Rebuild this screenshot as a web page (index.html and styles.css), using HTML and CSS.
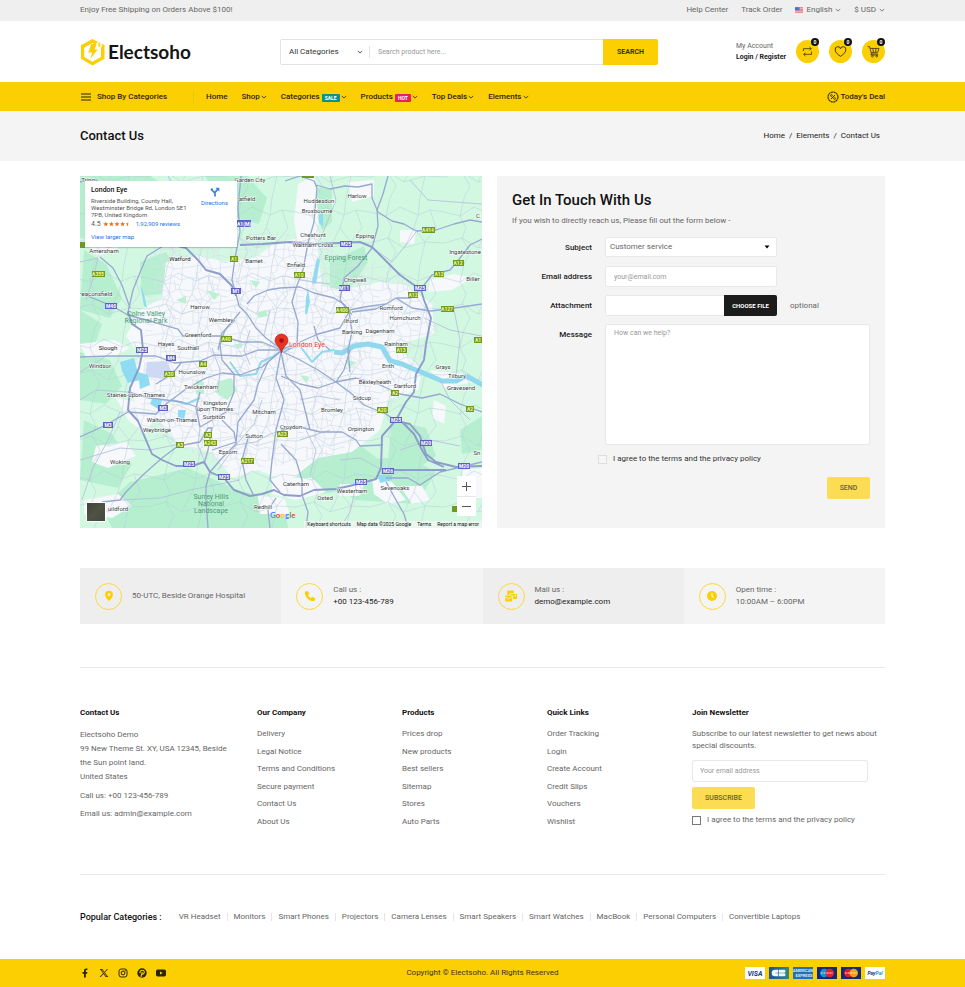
FILE: index.html
```html
<!DOCTYPE html>
<html lang="en">
<head>
<meta charset="utf-8">
<meta name="viewport" content="width=device-width, initial-scale=1">
<title>Contact Us - Electsoho</title>
<link rel="stylesheet" href="styles.css">
</head>
<body>
<svg class="defs" width="0" height="0" aria-hidden="true">
  <symbol id="chev" viewBox="0 0 8 8"><path d="M1 2.500 4 5.500 7 2.500" fill="none" stroke="currentColor" stroke-width="1.1"/></symbol>
</svg>

<div class="topbar">
  <div class="wrap topbar-row">
    <span>Enjoy Free Shipping on Orders Above $100!</span>
    <div class="toplinks">
      <a href="#">Help Center</a>
      <a href="#">Track Order</a>
      <button type="button" class="lang">
        <svg class="flag" viewBox="0 0 16 11" aria-hidden="true"><rect width="16" height="11" fill="#f3dede"/><path d="M0 1h16M0 4h16M0 7h16M0 10h16" stroke="#e0525c" stroke-width="1.5"/><rect width="9" height="6" fill="#4a74c9"/></svg>
        English <svg class="chev"><use href="#chev"/></svg>
      </button>
      <button type="button" class="currency">$ USD <svg class="chev"><use href="#chev"/></svg></button>
    </div>
  </div>
</div>

<header class="header">
  <div class="wrap header-row">
    <a class="logo" href="#">
      <svg viewBox="0 0 25 28" aria-hidden="true">
        <path d="M18 4 12.500 1 1 7.300V20.700L12.500 27.400 24.500 20.700V7.300L21.800 5.800V9L21 9.300V19L12.500 23.700 4.200 19V9.500L12.500 5 15 6.300Z" fill="#fccf02"/>
        <path d="M18.500 4.300 20.300 5v4.300l-1.800-1Z" fill="#fccf02"/>
        <path d="M11.200 6h5.600l-2.400 5.400h3.400L10.400 20.800l1.800-6.300H8.300Z" fill="#fccf02"/>
      </svg>
      <span>Electsoho</span>
    </a>
    <form class="search">
      <div class="search-cat">
        <select aria-label="Category"><option>All Categories</option></select>
        <svg class="chev"><use href="#chev"/></svg>
      </div>
      <input type="search" aria-label="Search product" placeholder="Search product here...">
      <button type="button">SEARCH</button>
    </form>
    <div class="account">
      <span>My Account</span>
      <a href="#">Login / Register</a>
    </div>
    <div class="actions">
      <a href="#" aria-label="Compare"><svg viewBox="0 0 16 16"><path d="M3 7.500V4.500h9.500M10.500 2.500l2.200 2-2.200 2M13 8v3.500H3.500M5.500 9.500l-2.200 2 2.200 2" fill="none" stroke="#3a3312"/></svg><b>0</b></a>
      <a href="#" aria-label="Wishlist"><svg viewBox="0 0 16 16"><path d="M8 14C4 11.200 1.500 9 1.500 6A3.300 3.300 0 0 1 8 4.700a3.300 3.300 0 0 1 6.500 1.300C14.500 9 12 11.200 8 14Z" fill="none" stroke="#3a3312" stroke-width="1.200"/></svg><b>0</b></a>
      <a href="#" aria-label="Cart"><svg viewBox="0 0 16 16"><path d="M.8 2h2.400l2.300 9h8M3.900 4.200h10.900l-1.600 4.600-8 .5M5.500 11l-.8 1.300h9M7.300 4.200l.6 4.900M11 4.200l-.3 4.600" fill="none" stroke="#3a3312"/><circle cx="6.700" cy="13.800" r="1.100" fill="none" stroke="#3a3312" stroke-width=".9"/><circle cx="12" cy="13.800" r="1.100" fill="none" stroke="#3a3312" stroke-width=".9"/></svg><b>0</b></a>
    </div>
  </div>
</header>

<nav class="nav">
  <div class="wrap nav-row">
    <button type="button" class="shopby">
      <svg viewBox="0 0 10 8" aria-hidden="true"><path d="M0 1h10M0 4h10M0 7h10" stroke="#2b2508" stroke-width="1.200"/></svg>
      Shop By Categories
    </button>
    <ul>
      <li><a href="#">Home</a></li>
      <li><a href="#">Shop<svg class="chev"><use href="#chev"/></svg></a></li>
      <li><a href="#">Categories<em class="sale">SALE</em><svg class="chev"><use href="#chev"/></svg></a></li>
      <li><a href="#">Products<em class="hot">HOT</em><svg class="chev"><use href="#chev"/></svg></a></li>
      <li><a href="#">Top Deals<svg class="chev"><use href="#chev"/></svg></a></li>
      <li><a href="#">Elements<svg class="chev"><use href="#chev"/></svg></a></li>
    </ul>
    <a class="deal" href="#">
      <svg viewBox="0 0 12 12" aria-hidden="true"><g fill="none" stroke="#2b2508"><circle cx="6" cy="6" r="5" stroke-width="1.100" stroke-dasharray="2.200 .4"/><path d="M4 8l4-4"/><circle cx="4.400" cy="4.500" r=".9" stroke-width=".8"/><circle cx="7.600" cy="7.500" r=".9" stroke-width=".8"/></g></svg>
      Today's Deal
    </a>
  </div>
</nav>

<div class="crumbs">
  <div class="wrap crumbs-row">
    <h1>Contact Us</h1>
    <div class="trail"><a href="#">Home</a><span>/</span><a href="#">Elements</a><span>/</span><span>Contact Us</span></div>
  </div>
</div>

<main class="wrap">
  <section class="contact">
    <div class="map">
      <svg class="map-art" viewBox="80 176 402 352" preserveAspectRatio="xMidYMid slice" role="img" aria-label="Map of London">
        <defs>
          <pattern id="streets" width="38" height="34" patternUnits="userSpaceOnUse">
            <path d="M0 5 9 7 19 3 30 8 38 5M0 19 8 16 17 21 27 17 38 19M0 29 12 27 22 31 38 29M6 0 9 7 8 16 12 27 10 34M19 3 17 21 22 31 20 34M20 0 19 3M10 0 6 0M30 8 27 17 31 24 30 34M30 0 30 8M9 12 18 11 28 13M12 27 17 21M31 24 38 25M22 8 24 18M3 6 3 17" fill="none" stroke="#d9e0ec" stroke-width=".7"/>
          </pattern>
          <pattern id="lanes" width="74" height="66" patternUnits="userSpaceOnUse">
            <path d="M0 14 16 18 30 9 48 17 60 12 74 14M0 45 18 40 34 50 55 44 74 45M20 0 16 18 22 30 18 40 26 54 20 66M48 17 44 30 55 44 50 66M50 0 48 17M34 50 44 30M60 12 66 30 55 44" fill="none" stroke="#b7cbd9" stroke-width=".5"/>
          </pattern>
        </defs>
        <rect x="80" y="176" width="402" height="352" fill="#d2f8e2"/>
        <g fill="#b5efcf">
          <path d="M80 176h70l20 12-18 26-22 4-18 26-32-6ZM84 250l22 14 16 34-12 20-30-8ZM140 262l26-10 10 16-14 26-20 2ZM80 310l22 14-6 18-16 2Z"/>
          <path d="M205 176h42l20 22-8 26-30-8ZM330 262l34-16 4 16-18 26-20 6ZM318 188l14 0 0 34-10 8-6-18Z"/>
          <path d="M80 352l30 8 12 26-16 18-26-4ZM84 420l28 14 20 30-14 24-38-8ZM130 482l58-14 50 22 46 12 4 26h-176l-10-20ZM300 450l56-8 26 20-10 24-50 8-26-20ZM392 420l34 8 10 28-26 18-22-14ZM460 430l22-14v34l-20 4ZM346 462l60-6 30 16-20 32-60-4-26-16ZM218 382l16-4 8 10-10 12-16-6Z"/>
        </g>
        <g fill="#f6f8fb">
          <path d="M166 262l34-6 26 6 28-4 20-14 24-6 20 14 4 34 20 4 38-8 24 2 28 20 2 30-40 12 28 22-4 22-30 10-8 30-28 22-34 6-30 24-30-12-26 8-20-26-32-6-20-24-26-22-6-22 12-22-14-20 14-26 22-12Z"/>
          <path d="M84 240l24-2 10 10-20 8ZM80 344l34-4 16 8-14 8-30 2ZM116 398l22 4 16 16-8 16-18-14ZM96 446l30-4 10 14-28 12-16-6ZM84 500l34-6 14 12-20 12-28-4ZM176 196l20-14 16 8-18 18ZM298 184l16-8 4 36 0 44-18 4-6-40ZM348 182l26-2 0 16-22 6ZM400 230l16 0-2 14-14-2ZM430 280l24-6 18 4-20 12-24 2ZM430 370l32 4 12 8-30 6ZM434 400l12 6-2 18-12-6ZM272 478l40 0 14 14-30 8-24-6ZM258 496l26 2 6 16-30 0ZM372 478l20 4 14 18-18 4-14-10ZM340 484l24 0-4 12-22 0ZM400 486l22 0 8 14-18 4ZM462 470l20-2v30h-16Z"/>
        </g>
        <path d="M150 240 280 232 400 270 440 330 400 400 330 460 230 470 140 430Z" fill="url(#streets)"/>
        <rect x="80" y="176" width="402" height="352" fill="url(#lanes)"/>
        <g fill="#bdf0d3">
          <path d="M217 382l14-4 6 12-10 10-12-8ZM196 380l8 2 0 12-8 0ZM258 312l8-2 2 6-10 2ZM206 290l14 4-6 6ZM176 300l10-4 0 8ZM250 280l10 2-4 6ZM345 360l12 2-8 6ZM300 375l10 2-4 6ZM232 345l10-2 0 5Z"/>
        </g>
        <path d="M147 362l20-1 5 12-7 6-20-2Z" fill="#d0d9f4"/>
        <path d="M120 362l14-4 6 22-12 3-6-12ZM138 372l10 3 2 10-10 4ZM152 399l10 1-2 10-10-6ZM178 410l8 0-2 10-6-2ZM140 284l4 10 3 14-3-2ZM317 258l3 2-4 24-4-1ZM308 288l2 14-3 12-2 0 1-16ZM319 215l4-2 0 14-4-4ZM378 475l14 0 0 5-12 3Z" fill="#8fdcf2"/>
        <path d="M172 400 186 404 200 398M230 362 240 376 256 374 261 362 272 357 284 349 300 346 312 362 322 352 334 350" fill="none" stroke="#8fd9ee" stroke-width="2" stroke-linejoin="round"/>
        <path d="M334 352 342 353 354 346 368 344 382 347 390 361 402 364 416 370 428 375 442 381 456 381 466 376 483 385" fill="none" stroke="#90d8ed" stroke-width="5" stroke-linejoin="round"/>
        <g fill="none" stroke="#b6c3dc" stroke-width=".9" stroke-linejoin="round">
          <path d="M80 262 98 258 92 282 86 300M80 372 100 360 112 352M80 400 96 390 128 392M120 412 108 440 92 470 82 500M180 444 150 450 120 448 80 460M262 400 254 424 236 445 218 470M200 428 198 445 206 465M285 430 270 434 256 442 236 445M300 440 330 430M300 400 318 396 340 400M212 348 220 370 218 392M250 330 244 350 250 365M270 310 264 335M376 250 392 262 410 240 416 232M300 280 330 284M400 450 430 440 460 446M382 470 360 458 340 460M120 500 160 498 190 490 240 480M330 176 336 200 320 240M440 380 450 400 470 420M424 318 450 330 482 336M454 310 460 340 456 376M306 430 316 450 310 476M356 486 350 512 340 528M168 176 180 200 176 226 190 246M410 180 428 200 482 204"/>
        </g>
        <g fill="none" stroke="#98a9d0" stroke-width="1.300" stroke-linejoin="round">
          <path d="M100 257 113 268 122 285 130 308M80 293 95 299 112 306 128 315 150 321 164 325 178 329 183 336 204 336 220 336 242 342 262 342 281 350M163 246 147 256 141 270 133 290 128 312"/>
          <path d="M241 176 238 208 240 232 235 258 232 280 236 294 239 306 247 314 256 328 266 338 281 349M235 320 222 333 218 350M247 304 254 296 268 290 280 288 300 287 314 293 334 298 345 305 352 315"/>
          <path d="M240 312 225 330 220 345 222 360 234 374 234 392 226 412 200 427 196 408 200 392M80 182 96 180 108 190M285 181 300 176 314 181 317 188 314 222 308 243 303 270 296 288 292 302 298 322 297 345 284 352M316 185 330 189 345 186 358 187 372 184 372 198 378 212 392 221 404 224 416 231 436 230 454 224 470 220 482 222"/>
          <path d="M388 176 383 194 377 210 378 226 372 248 358 266 344 278 340 300 349 312 352 332 348 350 350 372M282 349 300 342 318 334 340 328 350 310 364 307 386 304 396 298 410 298 420 290 432 275 450 270 460 258 470 245 482 239M352 312 376 309 386 304M396 298 412 308 430 311 448 309 482 304M314 326 318 340 330 350"/>
          <path d="M80 357 110 356 140 356 156 356 174 363 200 361 214 355 242 356 258 350 281 350M80 437 106 425 128 412 156 414 166 404 186 389 206 378 222 373 240 375 262 367 281 351M128 392 150 398 182 402 200 408M156 384 172 374 182 362"/>
          <path d="M102 502 120 500 126 492 144 474 162 458 178 446 200 442 208 428 212 428 208 450 204 464M212 450 236 442 234 432 222 420M281 351 268 362 258 384 254 400 238 422 236 444 222 458 210 472 206 486 206 500 208 528M248 438 242 460 246 480 254 496M270 528 268 510 276 498M281 352 286 376 300 390 310 430M281 352 276 378 284 400 276 430 272 460 270 480 280 492"/>
          <path d="M281 351 300 360 318 370 336 382 356 378 380 385 400 394 422 398 440 394 460 404 482 412M336 382 352 394 364 405 386 414 396 421M281 376 300 384 318 388 336 382 344 370 350 350M281 430 300 427 320 432 342 432 356 440 360 446 383 445M281 444 296 460 302 480 302 495 308 512 306 528M386 482 396 500 404 514 408 528M482 462 440 472 420 485 408 478 386 478"/>
        </g>
        <g fill="none" stroke="#8c9ccb" stroke-width="1.900" stroke-linejoin="round">
          <path d="M128 312 132 324 141 330 143 350 139 368 130 388 128 410 138 421 146 440 152 454 162 460 176 466 192 466 204 462 210 472 224 478 234 490 250 496 262 494 274 490 284 495 300 496 314 490 336 489 358 484 376 479 381 468 382 436 390 427 396 420 406 402 414 392 416 374 424 360 426 344 431 318 424 300 421 290 400 275 372 247 360 242 340 243 315 244 290 242 262 244 240 245M170 244 186 248 198 260 206 270 220 274 232 286 236 296M396 421 410 424 420 436 426 454 436 462 456 467 482 466M401 421 414 434 422 450 428 460 444 467M382 470 410 470 446 470"/>
        </g>
        <g class="shield-m">
          <g fill="#5f5fc4"><rect x="236" y="220" width="15" height="7"/><rect x="340" y="241" width="12" height="6"/><rect x="231" y="288" width="10" height="6"/><rect x="105" y="303" width="12" height="6"/><rect x="339" y="285" width="11" height="6"/><rect x="414" y="285" width="12" height="6"/><rect x="136" y="347" width="12" height="6"/><rect x="166" y="355" width="10" height="6"/><rect x="158" y="405" width="10" height="6"/><rect x="103" y="422" width="10" height="6"/><rect x="183" y="461" width="12" height="6"/><rect x="218" y="474" width="12" height="6"/><rect x="390" y="417" width="12" height="6"/><rect x="420" y="440" width="12" height="6"/><rect x="458" y="463" width="12" height="6"/><rect x="382" y="468" width="12" height="6"/><rect x="355" y="479" width="12" height="6"/></g>
          <text x="244" y="226">A1(M)</text><text x="346" y="246">M25</text><text x="236" y="293">M1</text><text x="111" y="308">M40</text><text x="344" y="290">M11</text><text x="420" y="290">M25</text><text x="142" y="352">M25</text><text x="171" y="360">M4</text><text x="163" y="410">M3</text><text x="108" y="427">M3</text><text x="189" y="466">M25</text><text x="224" y="479">M25</text><text x="396" y="422">M25</text><text x="426" y="445">M20</text><text x="464" y="468">M20</text><text x="388" y="473">M26</text><text x="361" y="484">M25</text>
        </g>
        <g class="shield-a">
          <g fill="#6f9a1e"><rect x="230" y="256" width="8" height="6"/><rect x="92" y="271" width="13" height="6"/><rect x="80" y="242" width="5" height="6"/><rect x="302" y="172" width="12" height="6"/><rect x="422" y="227" width="13" height="6"/><rect x="453" y="260" width="11" height="6"/><rect x="434" y="271" width="10" height="6"/><rect x="294" y="272" width="11" height="6"/><rect x="408" y="292" width="10" height="6"/><rect x="336" y="307" width="13" height="6"/><rect x="441" y="306" width="13" height="6"/><rect x="221" y="336" width="11" height="6"/><rect x="396" y="347" width="11" height="6"/><rect x="474" y="337" width="8" height="6"/><rect x="164" y="371" width="11" height="6"/><rect x="199" y="361" width="8" height="6"/><rect x="391" y="390" width="8" height="6"/><rect x="377" y="407" width="11" height="6"/><rect x="466" y="406" width="8" height="6"/><rect x="204" y="432" width="8" height="6"/><rect x="204" y="440" width="13" height="6"/><rect x="176" y="442" width="8" height="6"/><rect x="241" y="458" width="13" height="6"/><rect x="277" y="431" width="11" height="6"/><rect x="452" y="506" width="8" height="6"/></g>
          <text x="234" y="261">A1</text><text x="98" y="276">A355</text><text x="428" y="232">A414</text><text x="458" y="265">A12</text><text x="439" y="276">A12</text><text x="299" y="277">A10</text><text x="413" y="297">A12</text><text x="342" y="312">A406</text><text x="447" y="311">A127</text><text x="226" y="341">A40</text><text x="401" y="352">A13</text><text x="478" y="342">A1</text><text x="169" y="376">A30</text><text x="203" y="366">A4</text><text x="395" y="395">A2</text><text x="382" y="412">A20</text><text x="470" y="411">A2</text><text x="208" y="437">A3</text><text x="210" y="445">A243</text><text x="180" y="447">A3</text><text x="247" y="463">A217</text><text x="282" y="436">A23</text>
        </g>
        <g class="towns">
          <text x="88" y="182">Tring</text><text x="250" y="182">Garden City</text><text x="247" y="201">atfield</text><text x="261" y="240">Potters Bar</text><text x="104" y="253">Amersham</text><text class="big" x="180" y="261">Watford</text><text x="254" y="263">Barnet</text><text x="97" y="296">eaconsfield</text><text x="200" y="309">Harrow</text><text x="221" y="322">Wembley</text><text x="198" y="337">Greenford</text><text x="166" y="346">Hayes</text><text x="188" y="350">Southall</text><text class="big" x="108" y="350">Slough</text>
          <text x="319" y="203">Hoddesdon</text><text x="317" y="213">Broxbourne</text><text x="357" y="198">Harlow</text><text x="313" y="237">Cheshunt</text><text x="313" y="247">Waltham Cross</text><text x="365" y="238">Epping</text><text x="296" y="267">Enfield</text><text x="355" y="282">Chigwell</text><text x="465" y="254">Ingatestone</text><text x="473" y="281">Biller</text><text x="391" y="310">Romford</text><text x="405" y="320">Hornchurch</text><text x="351" y="323">Ilford</text><text x="352" y="334">Barking</text><text x="380" y="333">Dagenham</text><text x="396" y="346">Rainham</text><text x="478" y="218">C</text>
          <text x="100" y="368">Windsor</text><text x="192" y="374">Hounslow</text><text x="201" y="389">Twickenham</text><text x="136" y="397">Staines-upon-Thames</text><text x="215" y="405">Kingston</text><text x="215" y="411">upon Thames</text><text x="214" y="419">Surbiton</text><text x="172" y="422">Walton-on-Thames</text><text x="157" y="432">Weybridge</text><text x="264" y="414">Mitcham</text><text x="254" y="438">Sutton</text><text x="228" y="454">Epsom</text><text x="120" y="464">Woking</text><text x="118" y="511">uildford</text><text x="263" y="509">Redhill</text>
          <text x="388" y="368">Erith</text><text x="443" y="369">Grays</text><text x="457" y="378">Tilbury</text><text x="375" y="384">Bexleyheath</text><text x="405" y="388">Dartford</text><text x="461" y="390">Gravesend</text><text x="362" y="400">Sidcup</text><text x="332" y="412">Bromley</text><text x="291" y="429">Croydon</text><text x="361" y="431">Orpington</text><text x="477" y="455">Sn</text><text x="296" y="486">Caterham</text><text x="325" y="500">Oxted</text><text x="352" y="493">Westerham</text><text x="395" y="490">Sevenoaks</text>
        </g>
        <g class="parks">
          <text x="146" y="316">Colne Valley</text><text x="146" y="323">Regional Park</text><text x="346" y="260">Epping Forest</text><text x="211" y="499">Surrey Hills</text><text x="211" y="506">National</text><text x="211" y="513">Landscape</text>
        </g>
        <path d="M281.500 353C280 346 275 345 275 340.500a6.500 6.500 0 0 1 13 0C288 345 283 346 281.500 353Z" fill="#ea3323" stroke="#b31412" stroke-width=".6"/>
        <circle cx="281.500" cy="340.500" r="2.300" fill="#a01212"/>
        <text class="pinlabel" x="289" y="347">London Eye</text>
      </svg>

      <div class="place">
        <div class="place-info">
          <strong>London Eye</strong>
          <p>Riverside Building, County Hall,<br>Westminster Bridge Rd, London SE1<br>7PB, United Kingdom</p>
          <div class="rating">4.5
            <svg viewBox="0 0 45 9" aria-label="4.5 stars"><g fill="#e7711b"><path id="star" d="M4.500.5 5.600 3.300 8.600 3.500 6.300 5.400 7 8.300 4.500 6.700 2 8.300 2.700 5.400.4 3.500 3.400 3.300Z"/><use href="#star" x="9"/><use href="#star" x="18"/><use href="#star" x="27"/><path d="M40.500.5V6.700L38 8.300 38.700 5.400 36.400 3.500 39.400 3.300Z"/></g></svg>
            <a href="#">1,92,909 reviews</a></div>
          <a href="#">View larger map</a>
        </div>
        <a class="directions" href="#">
          <svg viewBox="0 0 12 12" aria-hidden="true"><path d="M6 11.500V7.500L2 3.300M6 8V6.500L9 3.200" fill="none" stroke="#3b7de0" stroke-width="2"/><path d="M6.500 1h4.700v4.700Z" fill="#3b7de0"/><circle cx="2.200" cy="3" r="1.400" fill="#3b7de0"/></svg>
          Directions
        </a>
      </div>
      <div class="zoom">
        <button type="button" aria-label="Zoom in"><svg viewBox="0 0 9 9"><path d="M0 4.500h9M4.500 0v9" stroke="#555"/></svg></button>
        <button type="button" aria-label="Zoom out"><svg viewBox="0 0 9 9"><path d="M0 4.500h9" stroke="#555"/></svg></button>
      </div>
      <button type="button" class="satellite" aria-label="Satellite view"></button>
      <div class="google"><i class="b">G</i><i class="r">o</i><i class="y">o</i><i class="b">g</i><i class="g">l</i><i class="r">e</i></div>
      <div class="attrib"><span>Keyboard shortcuts</span><span>Map data ©2025 Google</span><span>Terms</span><span>Report a map error</span></div>
    </div>

    <form class="form">
      <h2>Get In Touch With Us</h2>
      <p>If you wish to directly reach us, Please fill out the form below -</p>
      <div class="row">
        <label for="subject">Subject</label>
        <div class="field short select-box">
          <select id="subject"><option>Customer service</option></select>
          <svg viewBox="0 0 6 4" aria-hidden="true"><path d="M.5.500h5L3 3.500Z"/></svg>
        </div>
      </div>
      <div class="row">
        <label for="email">Email address</label>
        <input class="field short" id="email" type="email" placeholder="your@email.com">
      </div>
      <div class="row">
        <label for="file">Attachment</label>
        <div class="field short file"><input id="file" type="file"><span class="file-btn">CHOOSE FILE</span></div>
        <span class="optional">optional</span>
      </div>
      <div class="row top">
        <label for="message">Message</label>
        <textarea class="field" id="message" placeholder="How can we help?"></textarea>
      </div>
      <div class="agree"><input type="checkbox" id="agree"><label for="agree">I agree to the terms and the privacy policy</label></div>
      <button type="button" class="btn send">SEND</button>
    </form>
  </section>

  <section class="info">
    <div class="cell dark">
      <span class="ring"><svg viewBox="0 0 12 12"><path d="M6 .8a3.900 3.900 0 0 0-3.900 3.900C2.100 7 4.500 9.300 6 11.300 7.500 9.300 9.900 7 9.900 4.700A3.900 3.900 0 0 0 6 .8Zm0 2.500a1.400 1.400 0 1 1 0 2.800 1.400 1.400 0 0 1 0-2.800Z" fill-rule="evenodd"/></svg></span>
      <p>50-UTC, Beside Orange Hospital</p>
    </div>
    <div class="cell">
      <span class="ring"><svg viewBox="0 0 12 12"><path d="M1.300 1.600 3.500.9c.3 0 .5.100.6.4l.9 2.200c.1.300 0 .5-.1.700l-1 .9c.7 1.400 1.700 2.400 3.100 3.100l.9-1.100c.2-.2.500-.3.700-.2l2.200 1c.3.100.4.400.4.600l-.7 2.200c-.100.300-.4.400-.6.400C5 11.100.9 7 .9 2.200c0-.3.100-.5.400-.6Z"/></svg></span>
      <p>Call us :<br><a href="#">+00 123-456-789</a></p>
    </div>
    <div class="cell dark">
      <span class="ring"><svg viewBox="0 0 12 12"><path d="M2.200 1.500c0-.6.400-1 1-1h4.600c.6 0 1 .4 1 1v1.800H5.600c-.7 0-1.200.5-1.200 1.200v.3H2.200ZM5.200 4h6.300c.3 0 .5.200.5.500v4c0 .3-.2.500-.5.500H8V6.500c0-.9-.6-1.600-1.500-1.700H5.200ZM9.500 5v1.400H11V5ZM.2 5.600h7v.7L3.700 8.500.2 6.300ZM.2 7.200l3.500 2.200 3.500-2.200v3.300c0 .6-.4 1-1 1h-5c-.6 0-1-.4-1-1Z" fill-rule="evenodd"/></svg></span>
      <p>Mail us :<br><a href="#">demo@example.com</a></p>
    </div>
    <div class="cell">
      <span class="ring"><svg viewBox="0 0 12 12"><circle cx="6" cy="6" r="5"/><path d="M6 2.800V6.200L8 7.500" fill="none" stroke="#fff"/></svg></span>
      <p>Open time :<br>10:00AM – 6:00PM</p>
    </div>
  </section>

  <section class="columns">
    <div>
      <h3>Contact Us</h3>
      <address>Electsoho Demo<br>99 New Theme St. XY, USA 12345, Beside<br>the Sun point land.<br>United States</address>
      <p class="line">Call us: +00 123-456-789</p>
      <p class="line">Email us: admin@example.com</p>
    </div>
    <div>
      <h3>Our Company</h3>
      <ul><li><a href="#">Delivery</a></li><li><a href="#">Legal Notice</a></li><li><a href="#">Terms and Conditions</a></li><li><a href="#">Secure payment</a></li><li><a href="#">Contact Us</a></li><li><a href="#">About Us</a></li></ul>
    </div>
    <div>
      <h3>Products</h3>
      <ul><li><a href="#">Prices drop</a></li><li><a href="#">New products</a></li><li><a href="#">Best sellers</a></li><li><a href="#">Sitemap</a></li><li><a href="#">Stores</a></li><li><a href="#">Auto Parts</a></li></ul>
    </div>
    <div>
      <h3>Quick Links</h3>
      <ul><li><a href="#">Order Tracking</a></li><li><a href="#">Login</a></li><li><a href="#">Create Account</a></li><li><a href="#">Credit Slips</a></li><li><a href="#">Vouchers</a></li><li><a href="#">Wishlist</a></li></ul>
    </div>
    <form class="newsletter">
      <h3>Join Newsletter</h3>
      <p>Subscribe to our latest newsletter to get news about<br>special discounts.</p>
      <input type="email" aria-label="Your email address" placeholder="Your email address">
      <button type="button" class="btn">SUBSCRIBE</button>
      <div class="agree"><input type="checkbox" id="agree2"><label for="agree2">I agree to the terms and the privacy policy</label></div>
    </form>
  </section>

  <section class="popular">
    <strong>Popular Categories :</strong>
    <ul><li><a href="#">VR Headset</a></li><li><a href="#">Monitors</a></li><li><a href="#">Smart Phones</a></li><li><a href="#">Projectors</a></li><li><a href="#">Camera Lenses</a></li><li><a href="#">Smart Speakers</a></li><li><a href="#">Smart Watches</a></li><li><a href="#">MacBook</a></li><li><a href="#">Personal Computers</a></li><li><a href="#">Convertible Laptops</a></li></ul>
  </section>
</main>

<footer class="footer">
  <div class="wrap footer-row">
    <div class="social">
      <a href="#" aria-label="Facebook"><svg viewBox="0 0 10 10"><path d="M4 9.500V5.700H2.500V4.100H4V2.900C4 1.300 4.900.5 6.200.5c.6 0 1.200.1 1.200.1V2h-.7c-.7 0-.9.4-.9.900v1.200h1.600l-.3 1.600H5.800v3.800Z"/></svg></a>
      <a href="#" aria-label="X"><svg viewBox="0 0 10 10"><path d="M.8 1h2.600l2.100 2.900L8 1h1L5.900 4.500 9.300 9H6.700L4.400 5.900 1.700 9H.6L4 5.200ZM2.300 1.700 7.100 8.200h.7L3 1.700Z" fill-rule="evenodd"/></svg></a>
      <a href="#" aria-label="Instagram"><svg viewBox="0 0 10 10"><g fill="none" stroke="#2b2508"><rect x="1" y="1" width="8" height="8" rx="2.200"/><circle cx="5" cy="5" r="1.900"/></g><circle cx="7.300" cy="2.700" r=".6"/></svg></a>
      <a href="#" aria-label="Pinterest"><svg viewBox="0 0 10 10"><circle cx="5" cy="5" r="4.700"/><path d="M4 9 5.200 4M3.300 5.300C2.400 3.800 3.500 2.200 5.200 2.200s2.500 1.300 1.900 2.800-1.900 1.500-2.300.8" fill="none" stroke="#fccf02" stroke-width="1.100"/></svg></a>
      <a href="#" aria-label="YouTube"><svg viewBox="0 0 10 10"><rect x="0" y="1.500" width="10" height="7" rx="1.700"/><path d="M4 3.500 6.700 5 4 6.500Z" fill="#fccf02"/></svg></a>
    </div>
    <p>Copyright © Electsoho. All Rights Reserved</p>
    <div class="cards">
      <svg viewBox="0 0 20 12" role="img" aria-label="Visa"><rect width="20" height="12" fill="#fff"/><text x="10" y="9" fill="#1a3a8c" font-style="italic">VISA</text></svg>
      <svg viewBox="0 0 20 12" role="img" aria-label="CB"><defs><linearGradient id="cb"><stop stop-color="#1f4fa3"/><stop offset="1" stop-color="#2f8a7b"/></linearGradient></defs><rect width="20" height="12" fill="url(#cb)"/><path d="M9.300 2.700H6a3.300 3.300 0 0 0 0 6.600h3.300V6.300H6.500v-.6h2.800ZM10 2.700h5.500a1.600 1.600 0 0 1 0 3H10ZM10 6.300h5.500a1.600 1.600 0 0 1 0 3H10Z" fill="#f0f7fb"/></svg>
      <svg viewBox="0 0 20 12" role="img" aria-label="American Express"><rect width="20" height="12" fill="#2470b5"/><text x="10" y="5" class="tiny">AMERICAN</text><text x="11" y="10" class="tiny">EXPRESS</text></svg>
      <svg viewBox="0 0 20 12" role="img" aria-label="Maestro"><rect width="20" height="12" fill="#12287a"/><circle cx="7.300" cy="6" r="4.300" fill="#1a90d8"/><circle cx="12.700" cy="6" r="4.300" fill="#e0242d"/><path d="M4 6h12" stroke="#e8eefc" stroke-dasharray="1 .5"/></svg>
      <svg viewBox="0 0 20 12" role="img" aria-label="Mastercard"><rect width="20" height="12" fill="#12287a"/><circle cx="7.300" cy="6" r="4.300" fill="#dd1f2b"/><circle cx="12.700" cy="6" r="4.300" fill="#f5a01c"/><path d="M4 6h12" stroke="#fff3dc" stroke-dasharray="1 .5"/></svg>
      <svg viewBox="0 0 20 12" role="img" aria-label="PayPal"><rect width="20" height="12" fill="#fff"/><text x="10" y="8" class="pp"><tspan fill="#1a3378">Pay</tspan><tspan fill="#2497d5">Pal</tspan></text></svg>
    </div>
  </div>
</footer>
</body>
</html>
```
FILE: styles.css
```css
* { box-sizing: border-box; }
body { margin: 0; background: #fff; color: #666; font: 8px/12px Roboto, "Liberation Sans", sans-serif; }
h1, h2, h3, p, ul { margin: 0; padding: 0; }
ul { list-style: none; }
a { color: inherit; text-decoration: none; }
button, input, select, textarea { font: inherit; color: inherit; margin: 0; padding: 0; border: 0; background: none; border-radius: 0; outline: 0; }
button { cursor: pointer; }
select { appearance: none; width: 100%; }
svg { display: block; flex: none; }
input, textarea { font-size: 7px; }
::placeholder { color: #999; opacity: 1; }
.defs { position: absolute; }
.wrap { margin: 0 80px; }
.chev { width: 6px; height: 6px; }

/* top strip */
.topbar { background: #efefef; }
.topbar-row { display: flex; justify-content: space-between; align-items: center; height: 21px; padding-bottom: 1px; }
.toplinks { display: flex; align-items: center; }
.toplinks > * { margin-left: 13px; }
.lang, .currency { display: flex; align-items: center; gap: 3px; }
.flag { width: 8px; height: 6px; }

/* header */
.header-row { display: flex; align-items: center; height: 61px; }
.logo { display: flex; align-items: center; width: 200px; color: #151515; font: 700 19px/28px Lato, sans-serif; gap: 3px; }
.logo svg { width: 25px; height: 28px; }
.search { display: flex; width: 378px; height: 26px; border: 1px solid #e3e3e3; border-radius: 2px; }
.search-cat { display: flex; align-items: center; width: 89px; margin: 6px 0; padding: 0 6px 0 8px; border-right: 1px solid #e3e3e3; color: #333; }
.search input { flex: 1; min-width: 0; padding: 0 8px; }
.search button { width: 55px; margin: -1px; background: #fccf02; border-radius: 0 2px 2px 0; color: #3a3312; font-size: 7px; font-weight: 700; }
.account { margin-left: auto; display: flex; flex-direction: column; font-size: 7px; line-height: 11px; }
.account a { color: #222; font-weight: 700; }
.actions { display: flex; gap: 10px; margin-left: 10px; }
.actions a { position: relative; width: 23px; height: 23px; padding: 5px; border-radius: 50%; background: #fccf02; }
.actions svg { width: 13px; height: 13px; }
.actions b { position: absolute; right: 0; top: -2px; width: 8px; height: 8px; border-radius: 50%; background: #111; color: #fff; font-size: 5px; line-height: 8px; text-align: center; }

/* menu */
.nav { background: #fccf02; color: #2b2508; font-weight: 500; }
.nav-row { display: flex; align-items: center; height: 29px; }
.shopby { display: flex; align-items: center; gap: 6px; width: 114px; height: 14px; padding-left: 1px; border-right: 1px solid #f0c60a; }
.shopby svg { width: 10px; height: 8px; }
.nav ul { display: flex; gap: 14px; margin-left: 12px; }
.nav li a, .deal { display: flex; align-items: center; gap: 1px; }
.nav em { margin: 2px 0 0 1px; padding: 0 3px; border-radius: 1px; color: #fff; font: 700 5px/8px Roboto, sans-serif; }
.sale { background: #0e9187; }
.hot { background: #e91e63; }
.deal { margin-left: auto; }
.deal svg { width: 12px; height: 12px; }

/* page title */
.crumbs { background: #f4f4f4; }
.crumbs-row { display: flex; align-items: center; justify-content: space-between; height: 50px; color: #222; }
.crumbs h1 { font-size: 13px; font-weight: 500; line-height: 16px; color: #111; }
.trail { display: flex; gap: 4px; padding-right: 5px; }

/* map + form */
.contact { display: grid; grid-template-columns: 402fr 388fr; gap: 15px; padding-top: 15px; }
.map { position: relative; height: 352px; overflow: hidden; }
.map-art { width: 100%; height: 100%; }
.map-art text { font-family: Roboto, sans-serif; font-size: 6px; text-anchor: middle; }
.towns text { fill: #33373b; stroke: #fff; stroke-width: 1px; paint-order: stroke; }
.towns .big { fill: #111; }
.parks text { fill: #4f9a76; font-size: 7px; }
.shield-m text, .shield-a text { fill: #fff; font-size: 5px; font-weight: 700; }
.shield-a text { fill: #f6f3a0; }
.map-art .pinlabel { fill: #d93025; font-size: 7px; text-anchor: start; stroke: #fff; stroke-width: 1px; paint-order: stroke; }
.place { position: absolute; left: 5px; top: 5px; display: flex; justify-content: space-between; width: 152px; height: 66px; padding: 4px 9px 0 6px; background: #fff; box-shadow: 0 1px 1px rgba(0,0,0,.2); font-size: 6px; line-height: 7px; color: #555; }
.place strong { display: block; margin-bottom: 2px; color: #111; font-size: 7px; line-height: 10px; font-weight: 500; }
.place a { color: #1a73e8; }
.rating { display: flex; align-items: center; gap: 2px; margin: 2px 0 5px; font-size: 7px; line-height: 8px; }
.rating svg { width: 28px; height: 6px; }
.rating a { margin-left: 3px; font-size: 6px; }
.directions { display: flex; flex-direction: column; align-items: center; gap: 2px; padding-top: 2px; }
.directions svg { width: 10px; height: 10px; }
.zoom { position: absolute; right: 6px; bottom: 12px; width: 19px; background: #fff; }
.zoom button { display: grid; place-items: center; width: 19px; height: 20px; }
.zoom button + button { border-top: 1px solid #e6e6e6; }
.zoom svg { width: 9px; height: 9px; }
.satellite { position: absolute; left: 6px; bottom: 6px; width: 20px; height: 20px; border: 1px solid #fff; background: linear-gradient(135deg, #3c4638, #4f5245 50%, #3f4a3d); }
.google { position: absolute; left: 190px; bottom: 8px; font: 700 8px/10px Lato, sans-serif; text-shadow: 0 0 1px #fff; }
.google i { font-style: normal; }
.b { color: #4285f4; } .r { color: #ea4335; } .y { color: #fbbc05; } .g { color: #34a853; }
.attrib { position: absolute; right: 0; bottom: 0; display: flex; gap: 6px; padding: 0 3px; background: rgba(245,245,245,.7); color: #111; font-size: 5px; line-height: 7px; }

.form { display: flex; flex-direction: column; padding: 15px; background: #f4f4f4; }
.form h2 { color: #111; font-size: 15px; line-height: 18px; font-weight: 500; }
.form p { margin: 6px 0 10px; white-space: nowrap; }
.row { display: flex; align-items: center; margin-bottom: 8px; }
.row.top { align-items: flex-start; margin: 0; }
.row label { width: 80px; margin-right: 13px; text-align: right; color: #222; font-weight: 500; }
.row.top label { padding-top: 5px; }
.field { flex: 1; min-width: 0; height: 21px; padding: 0 8px; background: #fff; border: 1px solid #e8e8e8; border-radius: 2px; }
.field.short { flex: 0 0 172px; }
.select-box { display: flex; align-items: center; padding: 0 6px 0 4px; height: 20px; margin-bottom: 1px; }
.select-box svg { width: 6px; height: 4px; }
.file { position: relative; display: flex; justify-content: flex-end; padding: 0; }
.file input { position: absolute; inset: 0; width: 100%; opacity: 0; }
.file-btn { display: grid; place-items: center; width: 53px; margin: -1px; background: #1c1c1c; border-radius: 0 2px 2px 0; color: #fff; font-size: 6px; font-weight: 700; }
.optional { margin-left: 13px; }
textarea.field { display: block; height: 121px; padding: 2px 8px; resize: none; }
.agree { display: flex; align-items: center; gap: 6px; white-space: nowrap; }
.agree input { appearance: none; width: 9px; height: 9px; border: 1px solid #777; background: #fff; }
.form .agree { margin: 8px 0 0 86px; color: #333; }
.form .agree input { border-color: #ddd; background: #f6f6f6; }
.btn { height: 22px; border-radius: 2px; background: #fcdc52; color: #6b6035; font-size: 7px; font-weight: 500; }
.send { align-self: flex-end; width: 43px; margin-top: 12px; }

/* info strip */
.info { display: grid; grid-template-columns: repeat(4, 1fr); margin-top: 40px; }
.cell { display: flex; align-items: center; gap: 10px; height: 56px; padding-left: 15px; background: #f4f4f4; }
.cell.dark { background: #eee; }
.cell a { color: #222; }
.ring { display: grid; place-items: center; width: 27px; height: 27px; border: 1px solid #fcd83a; border-radius: 50%; }
.ring svg { width: 12px; height: 12px; fill: #fccf02; }

/* footer columns */
.columns { display: grid; grid-template-columns: 177fr 145fr 145fr 145fr 193fr; margin-top: 43px; padding: 39px 0 46px; border: solid #e8e8e8; border-width: 1px 0; }
.columns > * { min-width: 0; }
h3 { margin-bottom: 9px; color: #111; font-size: 8px; font-weight: 700; line-height: 12px; }
.columns ul { display: flex; flex-direction: column; justify-content: space-between; height: 100px; }
address { font-style: normal; line-height: 14px; white-space: nowrap; }
.line { margin-top: 6px; }
.newsletter { padding-right: 17px; }
.newsletter p { white-space: nowrap; }
.newsletter > input { display: block; width: 100%; height: 22px; margin: 8px 0 5px; padding: 0 7px; border: 1px solid #e8e8e8; border-radius: 2px; }
.newsletter .btn { display: block; width: 63px; margin-bottom: 5px; }

.popular { display: flex; align-items: center; gap: 17px; height: 84px; }
.popular strong { color: #111; font-size: 9px; font-weight: 500; white-space: nowrap; }
.popular ul { display: flex; flex-wrap: wrap; }
.popular li { line-height: 8px; }
.popular li + li { margin-left: 6px; padding-left: 6px; border-left: 1px solid #e5e5e5; }

.footer { background: #fccf02; color: #3a3312; }
.footer-row { display: grid; grid-template-columns: 1fr auto 1fr; align-items: center; height: 28px; padding-bottom: 1px; }
.social { display: flex; gap: 9px; }
.social svg { width: 10px; height: 10px; fill: #2b2508; }
.cards { display: flex; justify-content: flex-end; gap: 4px; }
.cards svg { width: 20px; height: 12px; }
.cards text { font-family: Roboto, sans-serif; font-size: 7px; font-weight: 700; text-anchor: middle; }
.cards .pp { font-size: 5px; font-style: italic; }
.cards .tiny { font-size: 4px; fill: #d6e8f5; }
```
